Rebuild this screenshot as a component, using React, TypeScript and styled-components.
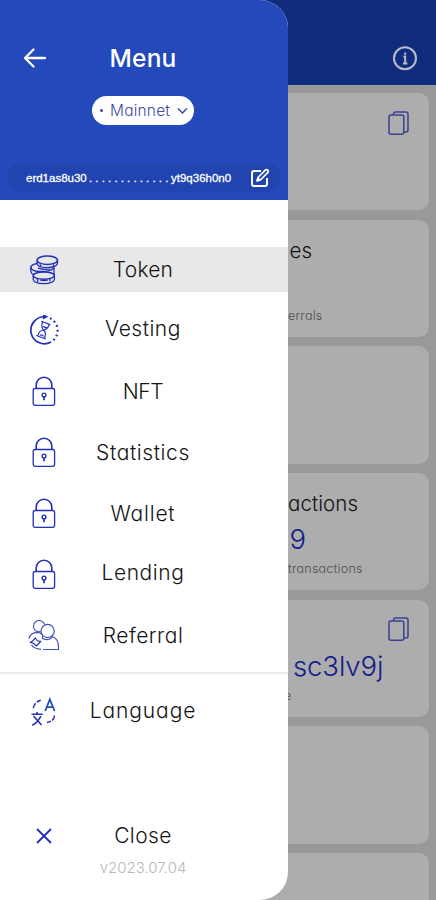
import React from "react";
import styled, { createGlobalStyle } from "styled-components";

const Global = createGlobalStyle`
  * { box-sizing: border-box; }
  body { margin: 0; font-family: Inter, "Liberation Sans", sans-serif; font-feature-settings: "cv11"; overflow: hidden; }
`;

const Screen = styled.div`
  position: relative;
  width: 436px;
  height: 900px;
  overflow: hidden;
  background: #999;
`;

const AppBar = styled.header`
  height: 85px;
  background: #112b7d;
  display: flex;
  justify-content: flex-end;
  padding: 45px 18px 0 0;
`;

const CardList = styled.main`
  display: grid;
  grid-auto-rows: 117.2px;
  gap: 9.5px;
  padding: 8px 7px 0;
`;

const Card = styled.section`
  display: grid;
  grid-template-rows: 45px 40px 24px;
  grid-template-columns: 281px 1fr 45px;
  background: #adadad;
  border-radius: 10px;
  overflow: hidden;
  white-space: nowrap;
`;

const CardLine = styled.div<{ $row: number; $indent?: number }>`
  grid-column: 2;
  grid-row: ${(p) => p.$row};
  margin-left: ${(p) => p.$indent ?? 0}px;
`;

const CardTitle = styled(CardLine)`
  font-size: 20.5px;
  font-weight: 350;
  line-height: 61px;
  letter-spacing: 0.1px;
  color: #111;
`;

const CardValue = styled(CardLine)`
  font-size: 27.5px;
  font-weight: 350;
  line-height: 42px;
  letter-spacing: -0.1px;
  color: #13208a;
`;

const CardNote = styled(CardLine)`
  font-size: 12.5px;
  font-weight: 350;
  line-height: 22px;
  letter-spacing: 0.25px;
  color: #4c4c4c;
`;

const CopySlot = styled.div`
  grid-column: 3;
  grid-row: 1;
  padding: 16.5px 0 0 4px;
`;

const Drawer = styled.aside`
  position: absolute;
  inset: 0 auto 0 0;
  width: 288px;
  display: flex;
  flex-direction: column;
  overflow: hidden;
  background: #fff;
  border-radius: 0 28px 28px 0;
`;

const DrawerHead = styled.div`
  flex: none;
  height: 200px;
  padding-top: 42px;
  background: #2349bb;
  color: #fff;
  display: flex;
  flex-direction: column;
`;

const TitleRow = styled.div`
  height: 32px;
  display: grid;
  grid-template-columns: 69px 148px 69px;
  align-items: center;
  text-align: center;
`;

const BackButton = styled.button`
  border: 0;
  padding: 0;
  background: none;
  height: 32px;
  display: grid;
  place-items: center;
`;

const Title = styled.h1`
  margin: 0;
  font-size: 24.5px;
  font-weight: 500;
  letter-spacing: 0.2px;
  line-height: 32px;
`;

const NetworkPill = styled.button`
  width: 102px;
  height: 29px;
  margin: 22px 0 0 92px;
  padding: 0 6px 0 8px;
  border: 0;
  border-radius: 15px;
  background: #fff;
  color: #4149a5;
  display: flex;
  align-items: center;
  gap: 7px;
  font: 350 15.5px Inter, sans-serif;
  font-feature-settings: "cv11";
  letter-spacing: 0.2px;
`;

const StatusDot = styled.span`
  flex: none;
  width: 3px;
  height: 3px;
  border-radius: 50%;
  background: #3d45a5;
`;

const AddressBar = styled.div`
  width: 272px;
  height: 28px;
  margin: 39px 0 0 8px;
  padding: 0 10px 0 18px;
  border-radius: 12px;
  background: #2144b1;
  display: flex;
  align-items: center;
  font: 500 11.5px "Liberation Sans", sans-serif;
  -webkit-text-stroke: 0.3px #fff;
`;

const AddressPart = styled.span<{ $width: number; $spacing: number }>`
  width: ${(p) => p.$width}px;
  letter-spacing: ${(p) => p.$spacing}px;
  white-space: nowrap;
`;

const EditSlot = styled.span`
  margin-left: auto;
  height: 20px;
`;

const Menu = styled.nav`
  display: flex;
  flex-direction: column;
`;

const MenuRow = styled.a<{ $height: number; $active?: boolean; $gap?: number }>`
  height: ${(p) => p.$height}px;
  margin-top: ${(p) => p.$gap ?? 0}px;
  display: grid;
  grid-template-columns: 88px 110px 90px;
  align-items: center;
  background: ${(p) => (p.$active ? "#e8e8e8" : "transparent")};
`;

const IconSlot = styled.span`
  display: grid;
  place-items: center;
`;

const Label = styled.span<{ $spacing: number; $drop?: number }>`
  display: flex;
  justify-content: center;
  margin-top: ${(p) => p.$drop ?? 0}px;
  font-size: 21px;
  font-weight: 350;
  line-height: 28px;
  letter-spacing: ${(p) => p.$spacing}px;
  white-space: nowrap;
  color: #141414;
`;

const Divider = styled.hr`
  width: 100%;
  height: 2px;
  margin: 6px 0 0;
  border: 0;
  background: #ebebeb;
`;

const Version = styled.p`
  margin: 2px 0 0;
  padding-right: 2px;
  text-align: center;
  font-size: 15px;
  font-weight: 300;
  line-height: 20px;
  color: #b8b8b8;
`;

const blue = "#2230b8";

const CopyIcon = () => (
  <svg width="22" height="28" viewBox="0 0 22 28" fill="none" stroke="#3a4190" strokeWidth="1.5">
    <path d="M5.5 5V4Q5.5 2 7.5 2H18Q20 2 20 4V20Q20 22 18 22H16" />
    <rect x="1" y="5" width="14.8" height="19.3" rx="2" />
  </svg>
);

const InfoIcon = () => (
  <svg width="26" height="26" viewBox="0 0 26 26" fill="none" stroke="#b7bbcb">
    <circle cx="13" cy="13.3" r="11" strokeWidth="2" />
    <path d="M11.3 11.6H13.2V18.5M11 18.5H15.4M13.2 7.6V9.8" strokeWidth="2" />
  </svg>
);

const BackIcon = () => (
  <svg width="24" height="22" viewBox="0 0 24 22" fill="none" stroke="#fff" strokeWidth="2.3" strokeLinecap="round" strokeLinejoin="round">
    <path d="M10.5 2.5L2 11L10.5 19.5M2.5 11H22" />
  </svg>
);

const ChevronIcon = () => (
  <svg width="11" height="8" viewBox="0 0 11 8" fill="none" stroke="#3c43a0" strokeWidth="1.4">
    <path d="M1 1.5L5.5 6L10 1.5" />
  </svg>
);

const EditIcon = () => (
  <svg width="20" height="20" viewBox="0 0 20 20" fill="none" stroke="#fff" strokeWidth="1.9" strokeLinejoin="round">
    <path d="M11 3H4Q2 3 2 5V16Q2 18 4 18H15Q17 18 17 16V10" />
    <path d="M7 13L8 9.5L15.2 2.2Q16.6 1 17.8 2.2Q18.8 3.4 17.7 4.7L10.5 12Z" strokeWidth="1.7" />
    <path d="M7 13L8 9.5L10.5 12Z" fill="#fff" strokeWidth="1" />
  </svg>
);

const CoinsIcon = () => (
  <svg width="32" height="30" viewBox="0 0 32 30" fill="none" stroke={blue} strokeWidth="1.25">
    <ellipse cx="19.3" cy="5.2" rx="10.2" ry="4.2" strokeWidth="1.5" />
    <path d="M9.1 5.5V8.5Q9.8 12.6 19 12.6Q28.2 12.4 29.5 8.5V5.5M12 9.3L13 11.5M25.5 9.3V11.3" />
    <path d="M9.1 8.5Q3.2 9.5 2.8 12.3Q3.4 16 11 16.5Q21 17 25.3 13.5V11.8" strokeWidth="1.5" />
    <path d="M2.8 12.3V16.3Q3.3 18.5 5.6 19.5M10 13.2Q16 15 22 14M26 12.5V20" />
    <ellipse cx="15.8" cy="20.6" rx="10.6" ry="3.6" strokeWidth="1.5" />
    <path d="M5.2 20.5V24.3Q6 28.6 15.7 28.6Q25.4 28.6 26.4 24.3V20.5M9 23.5L10 27M22 23.5V26.5M12 25Q16 26 20 25" />
  </svg>
);

const VestingIcon = () => (
  <svg width="30" height="30" viewBox="0 0 30 30" fill="none" stroke={blue} strokeWidth="1.2">
    <path d="M22 27A13.5 13.5 0 1 1 16.5 1.8" strokeWidth="1.7" />
    <path d="M14.5 0L18 1.7L14.5 3.6Z" fill={blue} />
    <path d="M21 3.2A13.5 13.5 0 0 1 24 25.5" strokeWidth="2.2" strokeDasharray="1.8 3" />
    <path d="M12.2 6.3L21.3 9.6M7.3 20.5L16.8 24M13.5 7.3Q11.8 12 14.5 15Q9.8 15.8 9 20.5M20 9.8Q19 14 14.5 15Q17.5 17.5 15.7 23" />
    <path d="M14 11.2Q16 12.8 18 12.3M11 20.5Q13 19 14.5 21.5" />
  </svg>
);

const LockIcon = () => (
  <svg width="24" height="31" viewBox="0 0 24 31" fill="none" stroke={blue}>
    <path d="M4.2 12V9A7.8 7.8 0 0 1 19.8 9V12" strokeWidth="1.6" />
    <rect x="1.2" y="12.5" width="21.4" height="16.8" rx="2" strokeWidth="1.3" />
    <circle cx="12" cy="19" r="1.9" strokeWidth="1.4" />
    <path d="M12 20.8V24.3" strokeWidth="1.7" />
  </svg>
);

const ReferralIcon = () => (
  <svg width="32" height="32" viewBox="0 0 32 32" fill="none" stroke="#4650bd" strokeWidth="1.2">
    <path d="M12.7 11.4Q10.5 12.4 8 11A5.7 5.7 0 1 1 16.5 4.3" />
    <circle cx="19.6" cy="11" r="6.6" />
    <path d="M15 16Q14 17 14.5 18.5Q17.5 20 20.5 19.5Q23.5 18.8 24.5 16.5Q30.5 19 30.5 27V29.5H15" />
    <path d="M1 18.5Q2.5 12.5 9.5 12.3Q12.5 12.3 14.2 15M13 29.3Q5.5 28.8 3.5 24.8" />
    <path d="M7.2 18L9.3 20.8L12.6 21.5L10.5 24L8.3 26L5.8 23.5L2.5 22.3L5 20.8Z" stroke={blue} />
  </svg>
);

const LanguageIcon = () => (
  <svg width="28" height="30" viewBox="0 0 28 30" fill="none" stroke={blue} strokeWidth="1.5">
    <path d="M15.2 15L19.8 3.5L24.6 15M16.8 11.2H23" stroke="#244ebf" strokeWidth="1.8" />
    <path d="M3.3 12.2Q4.3 6 10.8 4.3" strokeDasharray="5.5 1.5" />
    <path d="M24.5 19.5Q24 25.5 17 26.5" strokeDasharray="5.5 1.5" />
    <path d="M1.5 18.2H12.7M7 16V18M3.5 20L11.5 29M10.8 20Q8.5 26 2.3 29.2" strokeWidth="1.6" />
  </svg>
);

const CloseIcon = () => (
  <svg width="18" height="18" viewBox="0 0 18 18" fill="none" stroke={blue} strokeWidth="1.8">
    <path d="M2 2L16 16M16 2L2 16" />
  </svg>
);

export default function App() {
  return (
    <>
      <Global />
      <Screen>
        <AppBar><InfoIcon /></AppBar>
        <CardList>
          <Card><CopySlot><CopyIcon /></CopySlot></Card>
          <Card>
            <CardTitle $row={1} $indent={1.5}>es</CardTitle>
            <CardNote $row={3}>errals</CardNote>
          </Card>
          <Card />
          <Card>
            <CardTitle $row={1}>actions</CardTitle>
            <CardValue $row={2} $indent={1.5}>9</CardValue>
            <CardNote $row={3}>transactions</CardNote>
          </Card>
          <Card>
            <CopySlot><CopyIcon /></CopySlot>
            <CardValue $row={2} $indent={5}>sc3lv9j</CardValue>
            <CardNote $row={3} $indent={-4}>e</CardNote>
          </Card>
          <Card />
          <Card />
        </CardList>

        <Drawer>
          <DrawerHead>
            <TitleRow>
              <BackButton aria-label="Back"><BackIcon /></BackButton>
              <Title>Menu</Title>
            </TitleRow>
            <NetworkPill><StatusDot />Mainnet<ChevronIcon /></NetworkPill>
            <AddressBar>
              <AddressPart $width={63} $spacing={0}>erd1as8u30</AddressPart>
              <AddressPart $width={82} $spacing={3.15}>.............</AddressPart>
              <AddressPart $width={62} $spacing={0}>yt9q36h0n0</AddressPart>
              <EditSlot><EditIcon /></EditSlot>
            </AddressBar>
          </DrawerHead>
          <Menu>
            <MenuRow $height={45} $gap={47} $active><IconSlot><CoinsIcon /></IconSlot><Label $spacing={0.2}>Token</Label></MenuRow>
            <MenuRow $height={61} $gap={7}><IconSlot><VestingIcon /></IconSlot><Label $spacing={0.5} $drop={-2}>Vesting</Label></MenuRow>
            <MenuRow $height={61} $gap={1}><IconSlot><LockIcon /></IconSlot><Label $spacing={-0.4}>NFT</Label></MenuRow>
            <MenuRow $height={61}><IconSlot><LockIcon /></IconSlot><Label $spacing={0.6}>Statistics</Label></MenuRow>
            <MenuRow $height={61}><IconSlot><LockIcon /></IconSlot><Label $spacing={0.8}>Wallet</Label></MenuRow>
            <MenuRow $height={61}><IconSlot><LockIcon /></IconSlot><Label $spacing={0.6} $drop={-3}>Lending</Label></MenuRow>
            <MenuRow $height={61}><IconSlot><ReferralIcon /></IconSlot><Label $spacing={0.5}>Referral</Label></MenuRow>
            <Divider />
            <MenuRow $height={61} $gap={6}><IconSlot><LanguageIcon /></IconSlot><Label $spacing={0.9}>Language</Label></MenuRow>
            <MenuRow $height={41} $gap={74}><IconSlot><CloseIcon /></IconSlot><Label $spacing={0.4}>Close</Label></MenuRow>
          </Menu>
          <Version>v2023.07.04</Version>
        </Drawer>
      </Screen>
    </>
  );
}
